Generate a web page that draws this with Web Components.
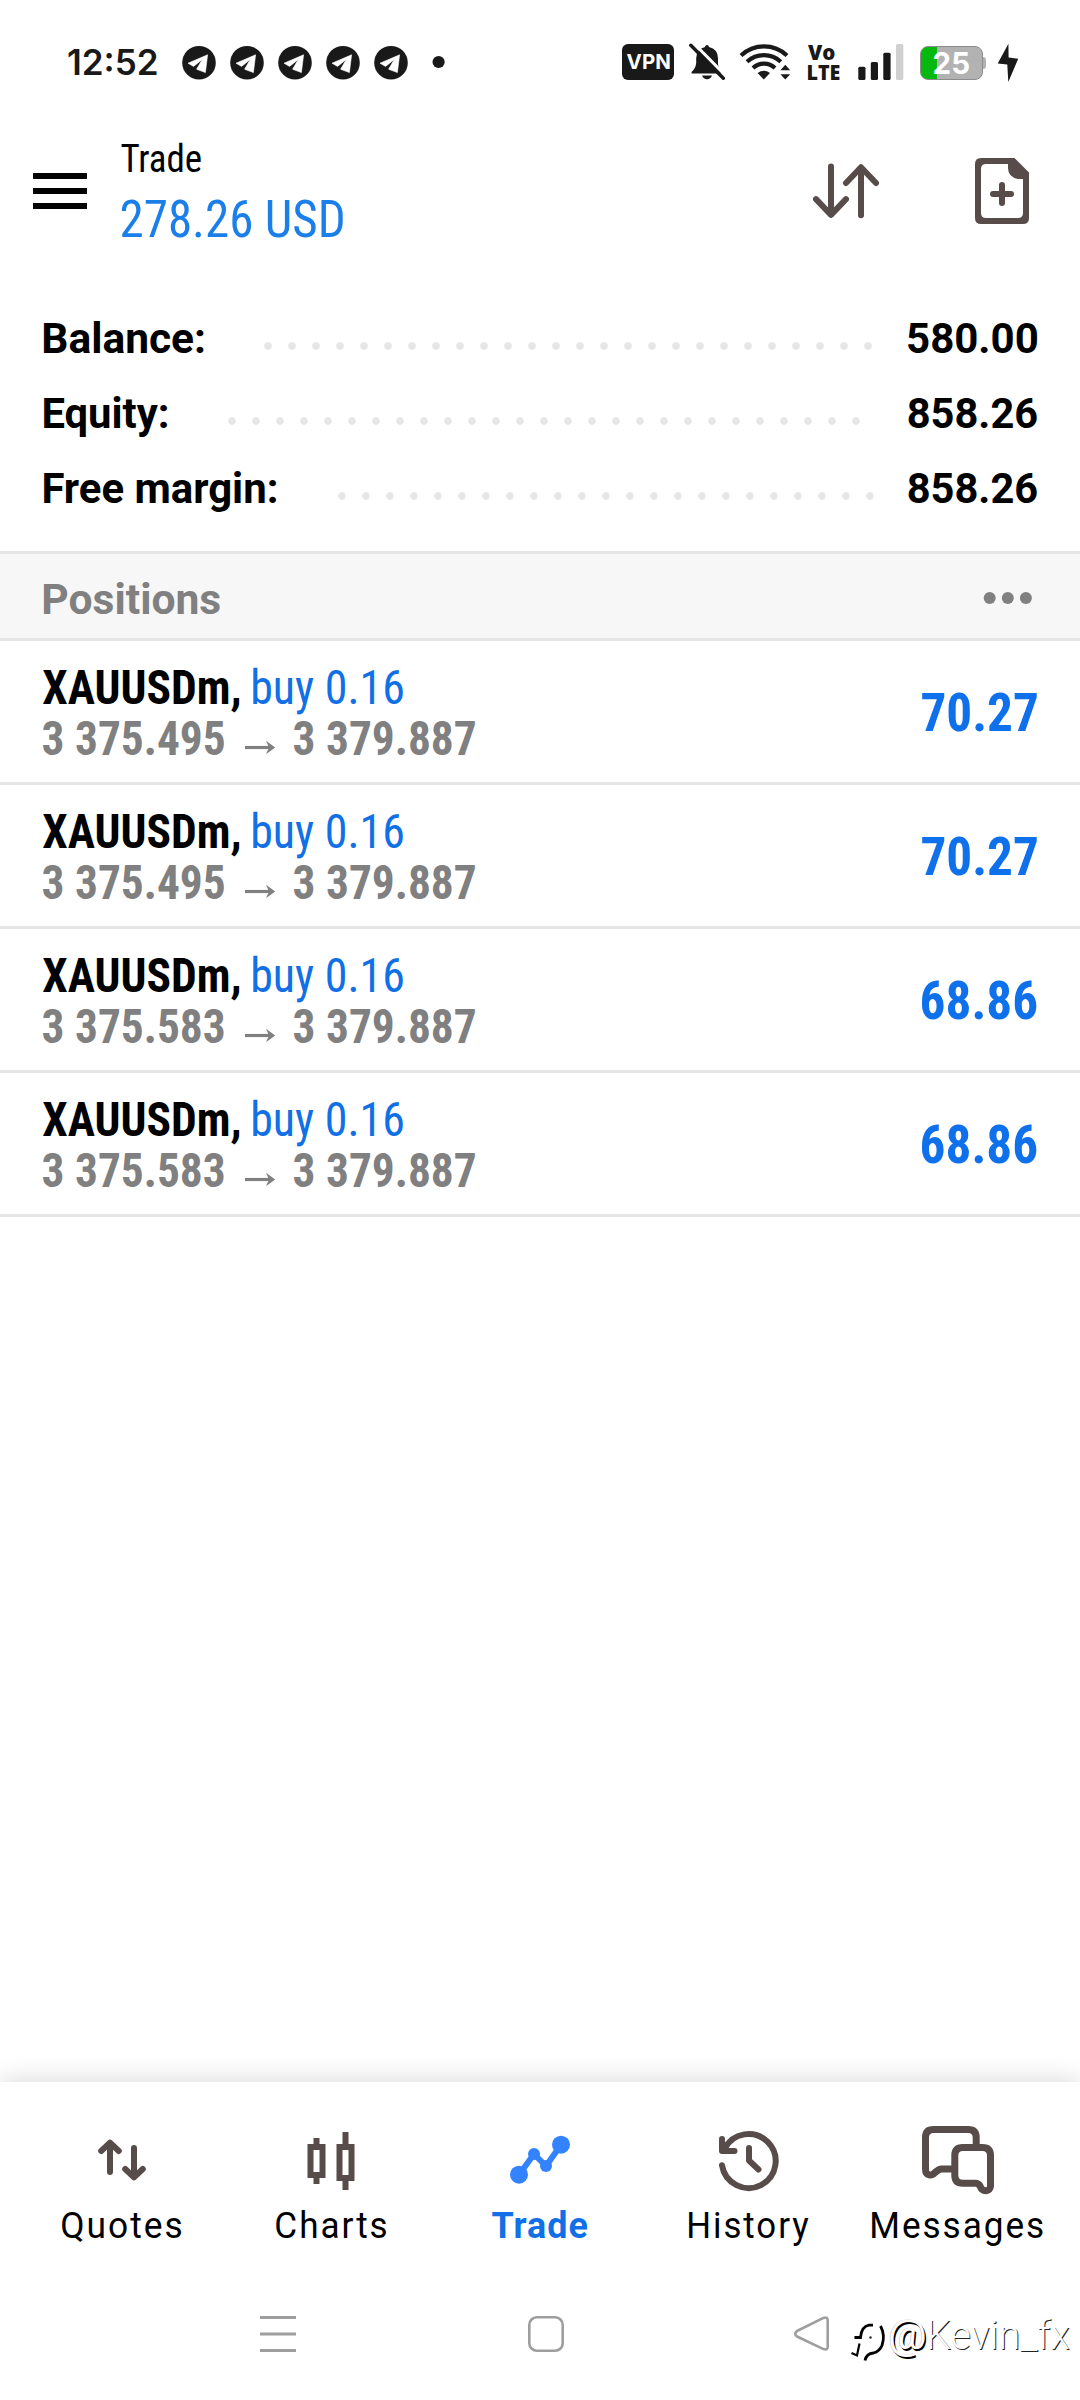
<!DOCTYPE html>
<html lang="en">
<head>
<meta charset="utf-8">
<title>Trade</title>
<style>
html,body{margin:0;padding:0;background:#fff}
body{width:1080px;height:2400px;overflow:hidden;font-family:"Roboto Condensed",Roboto,sans-serif}
</style>
</head>
<body>
<trade-screen></trade-screen>
<script>
const ICONS = {
  telegram: ['182 40 34 44', '<circle cx="199" cy="62.7" r="16.8" fill="#191919"/><path d="M188 63.2 L207.6 54.8 L205.4 72.6 L196.6 69.2 L202.2 59.6 L193.6 66.4 Z" fill="#fff" stroke="#fff" stroke-width=".6" stroke-linejoin="round"/>'],
  dot: ['432 40 13 44', '<circle cx="438.6" cy="62" r="6.1" fill="#191919"/>'],
  bell: ['689 40 36 44', '<path d="M707 45 q1.8 0 2 2 q9 2 9 11.500 v6 q.5 3.500 3.600 7.500 v1.500 h-30 v-1.500 q4-3.500 4.600-9 v-5 q.5-9 8.800-11 q.2-2 2-2z" fill="#191919"/><path d="M702 75.500 h10 q-1.500 3.800-5 3.800 t-5-3.800z" fill="#191919"/><path d="M693 42.500 L727 77" stroke="#fff" stroke-width="3.200"/><path d="M690.800 45.300 L723.300 78.300" stroke="#191919" stroke-width="3.400" stroke-linecap="round"/>'],
  wifi: ['739 40 52 44', '<g fill="none" stroke="#191919" stroke-width="4.200"><path d="M741 55.500 A33.500 33.500 0 0 1 787 55.500"/><path d="M747 61.800 A25 25 0 0 1 780.800 61.800"/><path d="M753 68 A16 16 0 0 1 775 68"/></g><path d="M763.800 79.500 L757.600 73 Q763.800 68.600 770 73 Z" fill="#191919"/><path d="M785.300 64.800 l4.900 5.400 h-9.800z M785.300 79.600 l-4.900-5.400 h9.800z" fill="#191919"/>'],
  signal: ['858 40 46 44', '<g fill="#191919"><rect x="858.300" y="66.700" width="7.200" height="13.300" rx="1.500"/><rect x="870.800" y="62" width="7.200" height="18" rx="1.500"/><rect x="883.300" y="52.700" width="7.300" height="27.300" rx="1.500"/></g><rect x="896" y="44" width="7.300" height="36" rx="1.500" fill="#d0d0d0"/>'],
  bolt: ['997 40 22 44', '<path d="M1008.400 43.800 L997.700 63.400 L1007.300 64.600 L1008.300 82 L1018.200 58.700 L1008.600 57.500 Z" fill="#191919"/>'],
  menu: ['33 163 54 56', '<path d="M33 176 h54 M33 191 h54 M33 206 h54" stroke="#000" stroke-width="6"/>'],
  sort: ['812 158 68 66', '<g fill="none" stroke="#574c49" stroke-width="6" stroke-linecap="round" stroke-linejoin="round"><path d="M831 166.500 V214.500 M816 199.200 L831 214.800 L846 199.200 M861 215.300 V167.500 M846 183 L861 167.200 L876 183"/></g>'],
  newdoc: ['975 158 54 66', '<path fill-rule="evenodd" fill="#574c49" d="M981 158 h33.500 L1029 172.500 V218 q0 6-6 6 h-42 q-6 0-6-6 V164 q0-6 6-6z M986 164 q-5 0-5 5 V213 q0 5 5 5 h32 q5 0 5-5 V179 h-5 q-10-2-10-11 v-4z"/><path d="M993 194 h18 M1002 185 v18" stroke="#574c49" stroke-width="6" stroke-linecap="round"/>'],
  more: ['983 590 49 16', '<g fill="#808080"><circle cx="989.700" cy="598" r="6"/><circle cx="1007.800" cy="598" r="6"/><circle cx="1025.900" cy="598" r="6"/></g>'],
  arrow: ['244 738 32 17', '<path d="M245 746.500 h26" stroke="#808080" stroke-width="3.200"/><path d="M275.200 746.500 L266 739.800 L269 746.500 L266 753.200z" fill="#808080"/>'],
  quotes: ['82 2120 80 80', '<g fill="none" stroke="#574c49" stroke-width="6" stroke-linecap="round" stroke-linejoin="round"><path d="M110 2143 V2172 M101.200 2151 L110 2142.600 L118.800 2151 M134 2148 V2177 M125.200 2169 L134 2177.400 L142.800 2169"/></g>'],
  charts: ['291 2120 80 80', '<g fill="none" stroke="#574c49" stroke-width="6"><rect x="310.500" y="2147" width="12" height="28"/><rect x="339.500" y="2147" width="12" height="31"/><path d="M316.500 2138 v6 M316.500 2178 v6 M345.500 2132 v12 M345.500 2181 v9"/></g>'],
  trade: ['500 2120 80 80', '<g fill="#3383ff"><circle cx="519" cy="2174.700" r="9"/><circle cx="534" cy="2154" r="6"/><circle cx="546" cy="2166" r="6"/><circle cx="561" cy="2144.700" r="9"/></g><path d="M519 2174.700 L534 2154 L546 2166 L561 2144.700" stroke="#3383ff" stroke-width="6" fill="none"/>'],
  history: ['709 2120 80 80', '<g fill="none" stroke="#574c49" stroke-width="6" stroke-linecap="round" stroke-linejoin="round"><path d="M722 2165.300 A27 27 0 1 0 724.500 2149 M722 2139 V2151 H734.500 M749 2148 V2160.500 L758.500 2169.500"/></g>'],
  messages: ['918 2120 80 80', '<g fill="none" stroke="#574c49" stroke-width="7" stroke-linejoin="round"><path d="M976.200 2147 V2137.500 Q976.200 2129.500 968.200 2129.500 H933.500 Q925.500 2129.500 925.500 2137.500 V2169 C925.500 2176.500 932 2176 935 2172.500 Q939 2169 941.500 2169 H954"/><path d="M962.800 2147.500 H982.500 Q990.500 2147.500 990.500 2155.500 V2186 C990.500 2192 982 2192.500 980 2186 Q978.500 2183.200 975.500 2183.200 H962.800 Q954.800 2183.200 954.800 2175.200 V2155.500 Q954.800 2147.500 962.800 2147.500z"/></g>'],
  recents: ['260 2315 36 38', '<path d="M260 2317.500 h36 M260 2334 h36 M260 2350.500 h36" stroke="#9e9e9e" stroke-width="3"/>'],
  home: ['528 2315 36 38', '<rect x="529.300" y="2317.300" width="33.400" height="33.400" rx="7.500" fill="none" stroke="#9e9e9e" stroke-width="2.600"/>'],
  back: ['794 2315 36 38', '<path d="M797 2331 L823.500 2317.900 Q827.700 2316.500 827.700 2320.500 V2346.500 Q827.700 2350.500 823.500 2349.100 L797 2336.500 Q793.500 2333.700 797 2331z" fill="none" stroke="#9e9e9e" stroke-width="2.600" stroke-linejoin="round"/>'],
  brand: ['848 2318 40 48', '<g fill="none" stroke-linecap="butt"><g stroke="#000" stroke-width="2.800"><path d="M853.500 2338.500 h6 q1-11 8.500-12.300 h4"/><path d="M858.500 2344.500 L856 2356.500 L850.500 2354" stroke-width="2.200"/><path d="M879.500 2327 q5 9 1.500 19.500 q-2.500 6-8.500 7.500 q-7 .5-8.500 7.500"/></g><circle cx="869.500" cy="2338.500" r="1.200" fill="#222"/></g>']
};

class UiIcon extends HTMLElement {
  constructor(){ super(); this.attachShadow({mode:'open'}); }
  connectedCallback(){
    const [box, body] = ICONS[this.getAttribute('name')];
    const [, , w, h] = box.split(' ');
    this.shadowRoot.innerHTML = `<style>:host{display:block;flex:none;width:${w}px;height:${h}px}svg{display:block}</style><svg width="${w}" height="${h}" viewBox="${box}">${body}</svg>`;
  }
}
customElements.define('ui-icon', UiIcon);

/* Text whose glyphs are condensed so that their ink spans the given width. */
class FitText extends HTMLElement {
  constructor(){
    super();
    this.attachShadow({mode:'open'}).innerHTML = `<style>:host{display:block;flex:none;white-space:nowrap}span{display:inline-block;transform-origin:0 50%;white-space:pre}</style><span><slot></slot></span>`;
  }
  connectedCallback(){
    const w = +this.getAttribute('w'), span = this.shadowRoot.querySelector('span');
    const cs = getComputedStyle(this), c = document.createElement('canvas').getContext('2d');
    /* measured at ten times the size, where the ink bounds are not rounded to whole pixels */
    c.font = `${cs.fontWeight} ${parseFloat(cs.fontSize) * 10}px ${cs.fontFamily}`;
    if (cs.letterSpacing !== 'normal') c.letterSpacing = parseFloat(cs.letterSpacing) * 10 + 'px';
    const m = c.measureText(this.textContent);
    const trail = cs.letterSpacing === 'normal' ? 0 : parseFloat(cs.letterSpacing);
    const left = -m.actualBoundingBoxLeft / 10;
    const ink = Math.min(m.actualBoundingBoxRight / 10, m.width / 10 - trail) - left;
    const s = w / ink;
    this.style.width = w + 'px';
    span.style.transform = `translateX(${-left * s}px) scaleX(${s})`;
  }
}
customElements.define('fit-text', FitText);

class StatusBar extends HTMLElement {
  constructor(){
    super();
    this.attachShadow({mode:'open'}).innerHTML = `<style>
    :host{display:flex;align-items:center;height:124px;color:#191919;box-sizing:border-box;padding-left:67.500px}
    .time{font:600 35px/44px Inter,sans-serif;margin-right:25.500px;padding-bottom:1px}
    .apps{display:flex;gap:14px;margin-right:16px}
    .vpn{margin-left:177px;width:52px;height:36px;border-radius:6px;background:#191919;display:flex;align-items:center;justify-content:center;margin-right:15px}
    .vpn fit-text{font:700 20px/36px Inter,sans-serif;color:#fff}
    .volte{margin:0 18.500px 0 16.500px;font:800 21px/20px "Open Sans",sans-serif}
    .battery{margin:0 11px 0 16px;display:flex;align-items:center;padding-top:2px}
    .cell{width:63px;height:34px;box-sizing:border-box;border:1px solid #8c8c8c;border-radius:8px;background:linear-gradient(90deg,#07b90f 16px,#b2b2b2 16px);display:flex;padding-left:13.300px}
    .cell fit-text{font:700 30px/33px Inter,sans-serif;color:#fff}
    .nub{width:3px;height:12px;background:#b2b2b2;border-radius:0 3px 3px 0}
    </style>
    <fit-text class="time" w="89">12:52</fit-text>
    <div class="apps">${'<ui-icon name="telegram"></ui-icon>'.repeat(5)}</div>
    <ui-icon name="dot" style="margin-left:8px"></ui-icon>
    <div class="vpn"><fit-text w="42.500">VPN</fit-text></div>
    <ui-icon name="bell"></ui-icon>
    <ui-icon name="wifi" style="margin-left:14px"></ui-icon>
    <div class="volte"><fit-text w="26.500">Vo</fit-text><fit-text w="31.500">LTE</fit-text></div>
    <ui-icon name="signal"></ui-icon>
    <div class="battery"><div class="cell"><fit-text w="34.700">25</fit-text></div><div class="nub"></div></div>
    <ui-icon name="bolt"></ui-icon>`;
  }
}
customElements.define('status-bar', StatusBar);

class AppHeader extends HTMLElement {
  constructor(){
    super();
    this.attachShadow({mode:'open'}).innerHTML = `<style>
    :host{display:flex;align-items:center;height:134px;box-sizing:border-box;padding:0 51px 0 33px}
    .titles{margin-left:34px;flex:1;padding-top:7px}
    .title{font-size:39px;line-height:50px;color:#000}
    .sum{font-size:51.500px;line-height:71px;color:#1a7fe8}
    ui-icon+ui-icon{margin-left:95px}
    </style>
    <ui-icon name="menu"></ui-icon>
    <div class="titles"><fit-text class="title" w="80">Trade</fit-text><fit-text class="sum" w="222">278.26 USD</fit-text></div>
    <ui-icon name="sort"></ui-icon><ui-icon name="newdoc"></ui-icon>`;
  }
}
customElements.define('app-header', AppHeader);

class SummaryRow extends HTMLElement {
  constructor(){ super(); this.attachShadow({mode:'open'}); }
  connectedCallback(){
    const a = n => this.getAttribute(n);
    this.shadowRoot.innerHTML = `<style>
    :host{display:flex;height:75px;align-items:center;font-family:Roboto,sans-serif;font-weight:700;font-size:42px;line-height:75px;color:#000;padding:0 43px 0 44px}
    .dots{height:8px;margin:15px auto 0 ${a('gap')}px;width:${a('dots')*24}px;background:radial-gradient(circle at 4px 4px,#e6e6e6 3.400px,#e6e6e600 4.200px) 0 0/24px 8px}
    </style><fit-text w="${a('w')}">${a('label')}</fit-text><div class="dots"></div><fit-text w="129">${a('value')}</fit-text>`;
  }
}
customElements.define('summary-row', SummaryRow);

class SectionHeader extends HTMLElement {
  constructor(){ super(); this.attachShadow({mode:'open'}); }
  connectedCallback(){
    this.shadowRoot.innerHTML = `<style>
    :host{display:flex;align-items:center;justify-content:space-between;box-sizing:border-box;height:90px;border:solid #e6e6e6;border-width:3px 0;background:#f7f7f7;padding:4px 48px 0 44px;font-family:Roboto,sans-serif;font-weight:700;font-size:42px;color:#808080}
    fit-text{line-height:50px;padding-top:3px}
    </style><fit-text w="176">${this.getAttribute('label')}</fit-text><ui-icon name="more"></ui-icon>`;
  }
}
customElements.define('section-header', SectionHeader);

class PositionRow extends HTMLElement {
  constructor(){ super(); this.attachShadow({mode:'open'}); }
  connectedCallback(){
    const a = n => this.getAttribute(n);
    this.shadowRoot.innerHTML = `<style>
    :host{display:flex;box-sizing:border-box;height:144px;border-bottom:3px solid #e6e6e6;padding:0 43.500px 0 43px;justify-content:space-between;align-items:center;font-size:48px;line-height:51px}
    .info{height:99px}.line{display:flex;height:51px;align-items:center}
    .sym{font-weight:700;color:#000;margin-right:14px}
    .side{color:#1170e6}
    .price{font-weight:700;color:#808080}
    ui-icon{margin:17px 18px 0 20px}
    .profit{font-weight:700;font-size:54px;line-height:54px;color:#0f70ec;padding-top:2px}
    </style>
    <div class="info"><div class="line"><fit-text class="sym" w="196">XAUUSDm,</fit-text><fit-text class="side" w="150">buy 0.16</fit-text></div>
    <div class="line"><fit-text class="price" w="181">${a('open')}</fit-text><ui-icon name="arrow"></ui-icon><fit-text class="price" w="181">${a('now')}</fit-text></div></div>
    <fit-text class="profit" w="115">${a('profit')}</fit-text>`;
  }
}
customElements.define('position-row', PositionRow);

class NavItem extends HTMLElement {
  constructor(){ super(); this.attachShadow({mode:'open'}); }
  connectedCallback(){
    const a = n => this.getAttribute(n);
    this.shadowRoot.innerHTML = `<style>
    :host{display:flex;flex-direction:column;align-items:center;width:209px;gap:8px;font-family:Roboto,sans-serif;font-size:36px;line-height:36px;letter-spacing:2px;color:#000}
    :host([active]){color:#1170e6;font-weight:700;letter-spacing:1px}
    fit-text{margin-right:1px}
    </style><ui-icon name="${a('icon')}"></ui-icon><fit-text w="${a('w')}">${a('label')}</fit-text>`;
  }
}
customElements.define('nav-item', NavItem);

class BottomNav extends HTMLElement {
  constructor(){
    super();
    this.attachShadow({mode:'open'}).innerHTML = `<style>
    :host{display:flex;box-sizing:border-box;height:208px;padding:38px 17.500px 0;background:#fff;box-shadow:0 -2px 24px rgba(0,0,0,.15)}
    </style>
    <nav-item icon="quotes" label="Quotes" w="119"></nav-item>
    <nav-item icon="charts" label="Charts" w="110"></nav-item>
    <nav-item icon="trade" label="Trade" w="95" active></nav-item>
    <nav-item icon="history" label="History" w="119.500"></nav-item>
    <nav-item icon="messages" label="Messages" w="170.500"></nav-item>`;
  }
}
customElements.define('bottom-nav', BottomNav);

class SystemNav extends HTMLElement {
  constructor(){
    super();
    this.attachShadow({mode:'open'}).innerHTML = `<style>
    :host{display:flex;box-sizing:border-box;height:110px;padding:0 0 22px 260px;background:#fff;align-items:center;position:relative}
    ui-icon[name=home]{margin-left:232px}ui-icon[name=back]{margin-left:230px}
    </style><ui-icon name="recents"></ui-icon><ui-icon name="home"></ui-icon><ui-icon name="back"></ui-icon>`;
  }
}
customElements.define('system-nav', SystemNav);

class AuthorMark extends HTMLElement {
  constructor(){
    super();
    this.attachShadow({mode:'open'}).innerHTML = `<style>
    :host{position:absolute;left:849px;top:2307px;display:flex;align-items:center;font:300 40px/50px Roboto,sans-serif;color:#fff}
    fit-text{text-shadow:1px 1px 0 #222}
    .at{font-weight:400;margin-left:1px;margin-right:4px;text-shadow:1.500px 1.500px 0 #000,-.5px -.5px 0 #bbb}
    ui-icon{margin-top:10px}
    </style><ui-icon name="brand"></ui-icon><fit-text class="at" w="35">@</fit-text><fit-text w="140">Kevin_fx</fit-text>`;
  }
}
customElements.define('author-mark', AuthorMark);

class TradeScreen extends HTMLElement {
  constructor(){
    super();
    this.attachShadow({mode:'open'}).innerHTML = `<style>
    :host{display:flex;flex-direction:column;width:1080px;height:2400px;position:relative;background:#fff;overflow:hidden}
    .summary{padding:43px 0 25px}
    main{flex:1}
    </style>
    <status-bar></status-bar>
    <app-header></app-header>
    <div class="summary">
      <summary-row label="Balance:" w="160" gap="60" dots="26" value="580.00"></summary-row>
      <summary-row label="Equity:" w="123.500" gap="60.700" dots="27" value="858.26"></summary-row>
      <summary-row label="Free margin:" w="232.500" gap="61.800" dots="23" value="858.26"></summary-row>
    </div>
    <section-header label="Positions"></section-header>
    <main>
      <position-row open="3 375.495" now="3 379.887" profit="70.27"></position-row>
      <position-row open="3 375.495" now="3 379.887" profit="70.27"></position-row>
      <position-row open="3 375.583" now="3 379.887" profit="68.86"></position-row>
      <position-row open="3 375.583" now="3 379.887" profit="68.86"></position-row>
    </main>
    <bottom-nav></bottom-nav>
    <system-nav></system-nav>
    <author-mark></author-mark>`;
  }
}
customElements.define('trade-screen', TradeScreen);
</script>
</body>
</html>
